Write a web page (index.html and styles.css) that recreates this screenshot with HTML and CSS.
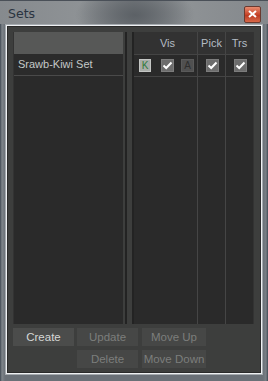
FILE: index.html
```html
<!DOCTYPE html>
<html lang="en">
<head>
  <meta charset="UTF-8">
  <title>Sets</title>
  <link rel="stylesheet" href="styles.css">
</head>
<body>
  <div class="window">
    <div class="titlebar">
      <span class="title">Sets</span>
      <span class="close-btn">
        <svg width="9" height="8" viewBox="0 0 9 8"><path d="M1 1 L8 7 M8 1 L1 7" stroke="#fff" stroke-width="2"/></svg>
      </span>
    </div>
    <div class="frame">
      <div class="panels">
        <div class="set-list">
          <div class="list-head"></div>
          <div class="list-row">Srawb-Kiwi Set</div>
        </div>
        <div class="splitter"></div>
        <div class="flags">
          <div class="flags-head">
            <div class="col col-vis">Vis</div>
            <div class="col col-pick">Pick</div>
            <div class="col col-trs">Trs</div>
          </div>
          <div class="flags-row">
            <div class="col col-vis vis-cell">
              <span class="box box-k">K</span>
              <span class="box box-chk"><svg width="11" height="9" viewBox="0 0 11 9"><path d="M1.5 4.5 L4.2 7 L9.5 1.5" stroke="#fff" stroke-width="2" fill="none"/></svg></span>
              <span class="box box-a">A</span>
            </div>
            <div class="col col-pick"><span class="box box-chk"><svg width="11" height="9" viewBox="0 0 11 9"><path d="M1.5 4.5 L4.2 7 L9.5 1.5" stroke="#fff" stroke-width="2" fill="none"/></svg></span></div>
            <div class="col col-trs"><span class="box box-chk"><svg width="11" height="9" viewBox="0 0 11 9"><path d="M1.5 4.5 L4.2 7 L9.5 1.5" stroke="#fff" stroke-width="2" fill="none"/></svg></span></div>
          </div>
          <div class="flags-fill">
            <div class="col col-vis"></div>
            <div class="col col-pick"></div>
            <div class="col col-trs"></div>
          </div>
        </div>
      </div>
      <div class="buttons">
        <div class="btn-row">
          <button class="btn">Create</button>
          <button class="btn btn-off">Update</button>
          <button class="btn btn-off btn-wide">Move Up</button>
        </div>
        <div class="btn-row btn-row2">
          <button class="btn btn-off">Delete</button>
          <button class="btn btn-off btn-wide">Move Down</button>
        </div>
      </div>
    </div>
  </div>
</body>
</html>
```
FILE: styles.css
```css
body {
  margin: 0;
  background: #5a6068;
  font-family: "Liberation Sans", Arial, sans-serif;
}
.window {
  width: 268px;
  height: 381px;
  box-sizing: border-box;
  padding: 0 5px;
  background: linear-gradient(to right, #3f4852 0, #7f858b 2px, #6a7077 5px, #6a7077 263px, #7a8086 266px, #3f4852 268px);
}
.titlebar {
  height: 24px;
  margin: 0 -5px;
  padding: 0 8px;
  display: flex;
  align-items: center;
  justify-content: space-between;
  background: radial-gradient(ellipse 60px 30px at 135px 14px, #5c6166 0, rgba(92, 97, 102, 0) 100%),
              linear-gradient(to right, #868a8e, #8e9295 30%, #7a7e82 50%, #8e9295 70%, #84888c);
  border-top: 1px solid #4a5058;
  box-sizing: border-box;
}
.title {
  font-family: "DejaVu Sans", sans-serif;
  font-size: 12.5px;
  color: #2a3440;
  margin-top: 1px;
}
.close-btn {
  width: 15px;
  height: 15px;
  margin-right: -1px;
  margin-top: 3px;
  display: flex;
  align-items: center;
  justify-content: center;
  border: 1px solid #6a3a30;
  border-radius: 2px;
  background: linear-gradient(#e88c70, #c8452a 50%, #b8361e 51%, #d86848);
}
.frame {
  height: 351px;
  box-sizing: border-box;
  border: 1px solid #a6abb0;
  box-shadow: inset 0 0 0 1px #eef0f2, inset 0 0 0 2px #2a2a2a;
  background: #3d3e3d;
  padding: 7px 5px 0 7px;
}
.panels {
  display: flex;
  height: 292px;
}
.set-list {
  width: 110px;
  background: #2a2a2a;
  border-left: 1px solid #333;
  box-sizing: border-box;
}
.list-head {
  height: 22px;
  background: #575857;
}
.list-row {
  height: 22px;
  line-height: 21px;
  box-sizing: border-box;
  padding-left: 4px;
  font-size: 11px;
  color: #c4c8c8;
  background: #2b2b2b;
  border-bottom: 1px solid #4a4a4a;
}
.splitter {
  width: 11px;
  background: linear-gradient(to right, #3d3e3d 2px, #232323 2px, #232323 4px, #3d3e3d 4px, #3d3e3d 9px, #232323 9px, #232323 11px);
}
.flags {
  width: 120px;
  display: flex;
  flex-direction: column;
  background: #2a2a2a;
  border-right: 1px solid #333;
  box-sizing: border-box;
}
.flags-head, .flags-row, .flags-fill {
  display: flex;
}
.flags-head {
  height: 22px;
  background: #323232;
  border-bottom: 1px solid #444;
  font-size: 11px;
  color: #b4bcc4;
  line-height: 22px;
}
.flags-row {
  height: 21px;
  border-bottom: 1px solid #444;
}
.flags-fill {
  flex: 1;
}
.col {
  box-sizing: border-box;
  border-right: 1px solid #454545;
  display: flex;
  align-items: center;
  justify-content: center;
}
.col-vis { width: 64px; }
.col-pick { width: 28px; }
.col-trs { width: 27px; border-right: none; }
.flags-head .col-vis { justify-content: flex-end; padding-right: 22px; }
.vis-cell {
  justify-content: flex-start;
  padding-left: 5px;
}
.box {
  width: 13px;
  height: 13px;
  box-sizing: border-box;
  display: flex;
  align-items: center;
  justify-content: center;
  font-size: 10px;
  line-height: 13px;
}
.box-k {
  width: 12px;
  background: #a8aca8;
  color: #2f7a3a;
  border: 1px solid #c4c6c4;
}
.box-chk {
  background: #6c6c6c;
  border: 1px solid #7c7c7c;
  margin-left: 1px;
}
.vis-cell .box-chk { margin-left: 10px; }
.box-a {
  background: #505050;
  color: #2e2e2e;
  border: 1px solid #5a5a5a;
  margin-left: 7px;
}
.buttons {
  padding-top: 4px;
}
.btn-row {
  display: flex;
  gap: 3px;
  height: 18px;
}
.btn-row2 {
  margin-top: 4px;
  padding-left: 64px;
}
.btn {
  width: 61px;
  height: 18px;
  padding: 0;
  border: none;
  background: #4b4c4b;
  color: #d6d8d6;
  font-family: "Liberation Sans", Arial, sans-serif;
  font-size: 11.5px;
}
.btn-wide { width: 64px; margin-left: 1px; }
.btn-off {
  background: #464746;
  color: #7c7e7c;
}
```
